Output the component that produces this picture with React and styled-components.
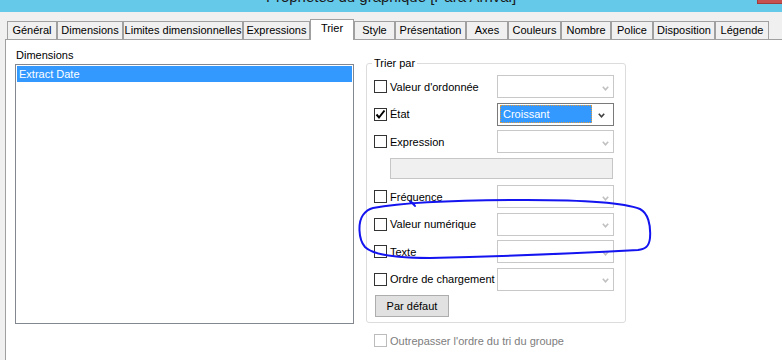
import React from 'react';
import styled, { createGlobalStyle } from 'styled-components';

const GlobalStyle = createGlobalStyle`
  html, body {
    margin: 0;
    padding: 0;
  }
  body {
    font-family: "Liberation Sans", Arial, sans-serif;
    font-size: 11px;
    color: #000;
    background: #f0f0f0;
  }
`;

const Window = styled.div`
  position: relative;
  width: 782px;
  height: 360px;
  overflow: hidden;
  background: #f0f0f0;
  display: flex;
  flex-direction: column;
`;

const TitleBar = styled.div`
  flex: none;
  height: 12px;
  background: #65c9ea;
  display: grid;
  grid-template-columns: 1fr auto 1fr;
  overflow: hidden;
`;

const Title = styled.div`
  grid-column: 2;
  font-size: 15px;
  line-height: 15px;
  margin-top: -11px;
  color: #1a1a1a;
  white-space: nowrap;
`;

const CloseButton = styled.div`
  grid-column: 3;
  justify-self: end;
  width: 24px;
  height: 3px;
  background: #c75050;
  border-left: 1px solid #a03c3c;
  border-bottom: 1px solid #a03c3c;
`;

const TabStrip = styled.div`
  flex: none;
  display: flex;
  align-items: flex-end;
  height: 20px;
  margin: 7px 0 0 7px;
  position: relative;
  z-index: 1;
`;

const Tab = styled.div`
  box-sizing: border-box;
  width: ${(p) => p.$w}px;
  height: ${(p) => (p.$active ? 21 : 18)}px;
  margin-bottom: ${(p) => (p.$active ? -1 : 0)}px;
  border: 1px solid #a0a0a0;
  border-bottom: none;
  background: ${(p) => (p.$active ? '#fff' : '#f0f0f0')};
  text-align: center;
  line-height: ${(p) => (p.$active ? 16 : 17)}px;
  white-space: nowrap;
`;

const Panel = styled.div`
  flex: 1;
  margin-left: 5px;
  border-top: 1px solid #a0a0a0;
  border-left: 1px solid #a0a0a0;
  background: #fff;
  display: flex;
  align-items: flex-start;
  gap: 12px;
  padding: 9px 0 0 9px;
`;

const LeftColumn = styled.div`
  width: 339px;
  display: flex;
  flex-direction: column;
`;

const FieldLabel = styled.div`
  line-height: 13px;
  margin-left: 1px;
`;

const ListBox = styled.div`
  box-sizing: border-box;
  margin-top: 2px;
  height: 260px;
  border: 1px solid #828790;
  padding: 1px;
`;

const ListItem = styled.div`
  height: 16px;
  line-height: 16px;
  padding-left: 2px;
  background: ${(p) => (p.$selected ? '#3399ff' : 'transparent')};
  color: ${(p) => (p.$selected ? '#fff' : '#000')};
`;

const RightColumn = styled.div`
  width: 260px;
  margin-top: 14px;
  display: flex;
  flex-direction: column;
`;

const GroupBox = styled.div`
  box-sizing: border-box;
  width: 260px;
  padding: 0 11px 5px 5px;
  border: 1px solid #dcdcdc;
  border-radius: 3px;
  display: flex;
  flex-direction: column;
`;

const Legend = styled.div`
  align-self: flex-start;
  margin: -8px 0 5px;
  padding: 0 2px;
  line-height: 14px;
  background: #fff;
`;

const Rows = styled.div`
  display: flex;
  flex-direction: column;
  gap: 4.5px;
`;

const Row = styled.div`
  display: flex;
  align-items: center;
  height: ${(p) => p.$h || 23}px;
  padding-left: ${(p) => p.$indent || 2}px;
  margin-top: ${(p) => p.$top || 0}px;
`;

const CheckBox = styled.span`
  box-sizing: border-box;
  flex: none;
  width: 13px;
  height: 13px;
  border: 1px solid ${(p) => (p.$disabled ? '#bcbcbc' : '#333')};
  background: #fff;
  display: flex;
  align-items: center;
  justify-content: center;
`;

const Label = styled.span`
  flex: 1;
  margin-left: 3px;
  white-space: nowrap;
  color: ${(p) => (p.$disabled ? '#7d7d7d' : '#000')};
`;

const Combo = styled.div`
  box-sizing: border-box;
  flex: none;
  width: 117px;
  height: 23px;
  border: 1px solid ${(p) => (p.$active ? '#7a7a7a' : '#c8c8c8')};
  background: #fff;
  display: flex;
  align-items: center;
  justify-content: flex-end;
  padding: ${(p) => (p.$active ? '2px' : '0 4px 0 0')};
`;

const Selected = styled.div`
  box-sizing: border-box;
  flex: 1;
  height: 18px;
  line-height: 16px;
  padding-left: 2px;
  background: #3399ff;
  color: #fff;
  border: 1px dotted #e09a3c;
`;

const ArrowZone = styled.div`
  width: 19px;
  display: flex;
  justify-content: center;
`;

const Chevron = styled.svg`
  display: block;
  margin-top: 3px;
`;

const TextField = styled.div`
  box-sizing: border-box;
  margin-left: 16px;
  width: 223px;
  height: 21px;
  align-self: flex-start;
  background: #f0f0f0;
  border: 1px solid #c6c6c6;
`;

const Button = styled.button`
  align-self: flex-start;
  margin-left: 3px;
  width: 74px;
  height: 22px;
  padding: 0;
  background: #e1e1e1;
  border: 1px solid #adadad;
  font: inherit;
  color: #000;
`;

const Annotation = styled.svg`
  position: absolute;
  top: 0;
  left: 0;
  pointer-events: none;
`;

const tabs = [
  ['Général', 50],
  ['Dimensions', 66],
  ['Limites dimensionnelles', 120],
  ['Expressions', 67],
  ['Trier', 44, true],
  ['Style', 41],
  ['Présentation', 71],
  ['Axes', 42],
  ['Couleurs', 53],
  ['Nombre', 50],
  ['Police', 42],
  ['Disposition', 62],
  ['Légende', 54],
];

const sortRows = [
  { label: "Valeur d'ordonnée" },
  { label: 'État', checked: true, value: 'Croissant' },
  { label: 'Expression', textField: true },
  { label: 'Fréquence' },
  { label: 'Valeur numérique' },
  { label: 'Texte' },
  { label: 'Ordre de chargement' },
];

function ArrowIcon({ dark }) {
  return (
    <Chevron width="7" height="5" viewBox="0 0 7 5">
      <polyline
        points="0.8,0.8 3.5,3.8 6.2,0.8"
        fill="none"
        stroke={dark ? '#404040' : '#c0c0c0'}
        strokeWidth="1.6"
      />
    </Chevron>
  );
}

function CheckMark() {
  return (
    <svg width="11" height="11" viewBox="0 0 11 11">
      <polyline points="1.5,5.5 4,8.5 9.5,1.5" fill="none" stroke="#000" strokeWidth="2" />
    </svg>
  );
}

function SortRow({ row }) {
  return (
    <>
      <Row>
        <CheckBox>{row.checked && <CheckMark />}</CheckBox>
        <Label>{row.label}</Label>
        {row.value ? (
          <Combo $active>
            <Selected>{row.value}</Selected>
            <ArrowZone>
              <ArrowIcon dark />
            </ArrowZone>
          </Combo>
        ) : (
          <Combo>
            <ArrowIcon />
          </Combo>
        )}
      </Row>
      {row.textField && (
        <Row>
          <TextField />
        </Row>
      )}
    </>
  );
}

export default function App() {
  return (
    <Window>
      <GlobalStyle />
      <TitleBar>
        <Title>Propriétés du graphique [Para Arrival]</Title>
        <CloseButton />
      </TitleBar>

      <TabStrip>
        {tabs.map(([name, w, active]) => (
          <Tab key={name} $w={w} $active={active}>
            {name}
          </Tab>
        ))}
      </TabStrip>

      <Panel>
        <LeftColumn>
          <FieldLabel>Dimensions</FieldLabel>
          <ListBox>
            <ListItem $selected>Extract Date</ListItem>
          </ListBox>
        </LeftColumn>

        <RightColumn>
          <GroupBox>
            <Legend>Trier par</Legend>
            <Rows>
              {sortRows.map((row) => (
                <SortRow key={row.label} row={row} />
              ))}
              <Button>Par défaut</Button>
            </Rows>
          </GroupBox>
          <Row $h={13} $indent={8} $top={11}>
            <CheckBox $disabled />
            <Label $disabled>Outrepasser l'ordre du tri du groupe</Label>
          </Row>
        </RightColumn>
      </Panel>

      {/* hand-drawn marker around "Valeur numérique" */}
      <Annotation width="782" height="360" viewBox="0 0 782 360">
        <path
          d="M410 201.5 Q413 203 415 206"
          fill="none"
          stroke="#1414f0"
          strokeWidth="2"
          strokeLinecap="round"
        />
        <path
          d="M373 208 C400 203, 450 200, 527 200 C580 200, 622 202, 640 209 C648 213, 651 225, 650 238 C649 247, 645 249, 638 250 C600 252, 520 256, 430 258 C392 258, 372 254, 365 247 C358 239, 358 222, 363 215 C366 211, 369 209, 373 208 Z"
          fill="none"
          stroke="#1414f0"
          strokeWidth="2"
          strokeLinejoin="round"
        />
      </Annotation>
    </Window>
  );
}
